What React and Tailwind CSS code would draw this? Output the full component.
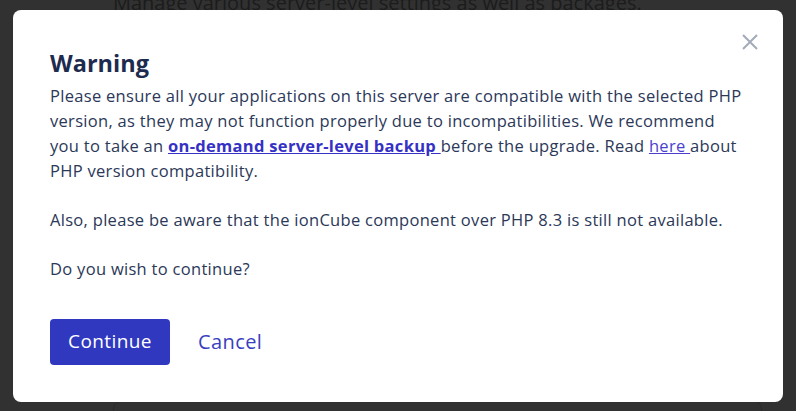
export default function App() {
  return (
    <div className="relative h-[411px] w-[796px] overflow-hidden bg-[#313131] font-['Open_Sans',sans-serif]">
      {/* page behind the overlay */}
      <div className="flex h-full flex-col pl-[113px] pr-[34px]">
        <p className="-mt-[12px] text-[20px] text-[#1c1c1c]">Manage various server-level settings as well as packages.</p>
        <div className="mt-auto -mb-[20px] h-[30px] rounded-lg border border-[#2a2a2a]" />
      </div>

      {/* modal overlay */}
      <div className="absolute inset-0 flex items-center justify-center">
        <div className="relative h-[392px] w-[770px] rounded-lg bg-white px-[37px] pt-[38px]">
          <button className="absolute right-[24px] top-[23px] text-[#a3aab8]">
            <svg width="18" height="18" viewBox="0 0 18 18" fill="none" stroke="currentColor" strokeWidth="2">
              <path d="M2 2 L16 16 M16 2 L2 16" />
            </svg>
          </button>
          <h2 className="text-[23.5px] font-bold leading-[30px] text-[#1d2b4f]">Warning</h2>
          <div className="mt-[5px] text-[16.5px] leading-[25px] tracking-[0.3px] text-[#2b3858]">
            <p>
              Please ensure all your applications on this server are compatible with the selected PHP version, as they
              may not function properly due to incompatibilities. We recommend you to take an{' '}
              <a className="font-bold text-[#3531c5] underline">on-demand server-level backup </a>
              before the upgrade. Read <a className="text-[#4b3fd0] underline">here </a>about PHP version compatibility.
            </p>
            <p className="mt-[24px]">Also, please be aware that the ionCube component over PHP 8.3 is still not available.</p>
            <p className="mt-[24px]">Do you wish to continue?</p>
          </div>
          <div className="mt-[38px] flex items-center gap-[28px]">
            <button className="h-[46px] w-[120px] rounded-[4px] bg-[#2f38bf] text-[19px] tracking-[0.4px] text-white">
              Continue
            </button>
            <button className="text-[20px] tracking-[0.4px] text-[#3a3fc0]">Cancel</button>
          </div>
        </div>
      </div>
    </div>
  );
}
